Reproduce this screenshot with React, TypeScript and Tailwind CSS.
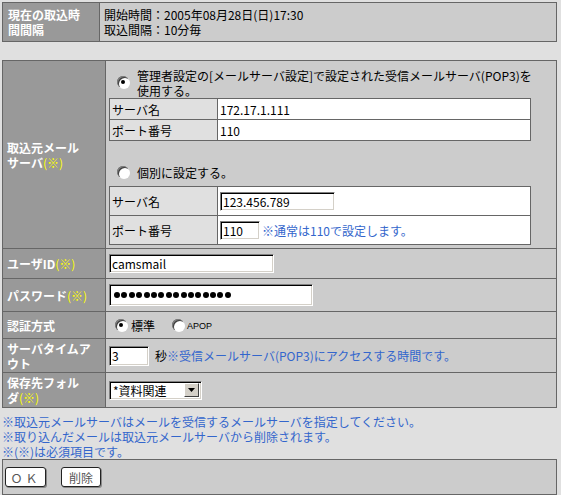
import React from "react";

const jp = "font-['Noto_Sans_CJK_JP','Noto_Sans',sans-serif]";

function Radio({ checked }: { checked?: boolean }) {
  return (
    <span className="inline-flex h-[12px] w-[12px] shrink-0 items-center justify-center rounded-full bg-white shadow-[inset_1px_1px_0_#808080,inset_2px_2px_0_#404040,1px_1px_0_#ffffff]">
      {checked && <span className="h-[4px] w-[4px] rounded-full bg-black" />}
    </span>
  );
}

const inset =
  "border border-t-[#808080] border-l-[#808080] border-b-white border-r-white bg-white shadow-[inset_1px_1px_0_#000,inset_-1px_-1px_0_#d4d0c8]";

function TextBox({ value, className }: { value: string; className: string }) {
  return (
    <input
      readOnly
      value={value}
      className={`${inset} ${className} px-[2px] text-[12px] text-black outline-none ${jp}`}
    />
  );
}

const label = "border border-[#666] bg-[#999] px-[4px] align-middle font-bold text-white";
const cell = "border border-[#666] bg-[#ccc] align-middle";
const Req = () => <span className="font-normal text-[#ffff00]">(※)</span>;

export default function App() {
  return (
    <div className={`min-h-[495px] bg-[#e0e0e0] pl-[2px] pt-[2px] text-[12px] leading-[15px] text-black ${jp}`}>
      {/* 取込時間間隔 */}
      <table className="w-[555px] border-collapse">
        <tbody>
          <tr className="h-[39px]">
            <td className={`${label} w-[97px] pl-[5px]`}>
              現在の取込時
              <br />
              間間隔
            </td>
            <td className={`${cell} pl-[4px]`}>
              開始時間：2005年08月28日(日)17:30
              <br />
              取込間隔：10分毎
            </td>
          </tr>
        </tbody>
      </table>

      <table className="mt-[18px] w-[555px] border-collapse">
        <tbody>
          <tr className="h-[187px]">
            <td className={`${label} w-[103px]`}>
              取込元メール
              <br />
              サーバ<Req />
            </td>
            <td className={`${cell} !align-top pb-[3px] pl-[3px] pt-[7px]`}>
              <div className="flex items-start">
                <span className="ml-[8px] mt-[3px]">
                  <Radio checked />
                </span>
                <div className="ml-[8px]">
                  管理者設定の[メールサーバ設定]で設定された受信メールサーバ(POP3)を
                  <br />
                  使用する。
                </div>
              </div>
              <table className="w-[422px] border-collapse">
                <tbody>
                  <tr className="h-[21px]">
                    <td className="w-[108px] border border-[#666] bg-[#e0e0e0] pl-[2px]">サーバ名</td>
                    <td className="border border-[#666] bg-white pl-[2px]">172.17.1.111</td>
                  </tr>
                  <tr className="h-[21px]">
                    <td className="border border-[#666] bg-[#e0e0e0] pl-[2px]">ポート番号</td>
                    <td className="border border-[#666] bg-white pl-[2px]">110</td>
                  </tr>
                </tbody>
              </table>
              <div className="mt-[24px] flex items-center">
                <span className="ml-[8px]">
                  <Radio />
                </span>
                <span className="ml-[8px]">個別に設定する。</span>
              </div>
              <table className="mt-[6px] w-[422px] border-collapse">
                <tbody>
                  <tr className="h-[29px]">
                    <td className="w-[108px] border border-[#666] bg-[#e0e0e0] pl-[2px]">サーバ名</td>
                    <td className="border border-[#666] bg-white pl-[2px]">
                      <TextBox value="123.456.789" className="block h-[19px] w-[115px]" />
                    </td>
                  </tr>
                  <tr className="h-[29px]">
                    <td className="border border-[#666] bg-[#e0e0e0] pl-[2px]">ポート番号</td>
                    <td className="border border-[#666] bg-white pl-[2px]">
                      <div className="flex items-center">
                        <TextBox value="110" className="h-[19px] w-[40px]" />
                        <span className="ml-[2px] text-[#3366cc]">※通常は110で設定します。</span>
                      </div>
                    </td>
                  </tr>
                </tbody>
              </table>
            </td>
          </tr>

          <tr className="h-[30px]">
            <td className={label}>
              ユーザID<Req />
            </td>
            <td className={`${cell} pl-[3px]`}>
              <TextBox value="camsmail" className="block h-[19px] w-[165px]" />
            </td>
          </tr>

          <tr className="h-[33px]">
            <td className={label}>
              パスワード<Req />
            </td>
            <td className={`${cell} pl-[3px]`}>
              <div className={`${inset} flex h-[22px] w-[204px] items-center gap-[1.4px] pl-[4px]`}>
                {Array.from({ length: 16 }).map((_, i) => (
                  <span key={i} className="h-[6px] w-[6px] rounded-full bg-black" />
                ))}
              </div>
            </td>
          </tr>

          <tr className="h-[27px]">
            <td className={label}>認証方式</td>
            <td className={`${cell} pl-[9px]`}>
              <div className="flex items-center">
                <Radio checked />
                <span className="ml-[4px]">標準</span>
                <span className="ml-[17px]">
                  <Radio />
                </span>
                <span className="ml-[3px] mt-[2px] font-['Liberation_Sans',sans-serif] text-[9px]">APOP</span>
              </div>
            </td>
          </tr>

          <tr className="h-[34px]">
            <td className={label}>
              サーバタイムア
              <br />
              ウト
            </td>
            <td className={`${cell} pl-[3px]`}>
              <div className="flex items-center">
                <TextBox value="3" className="h-[20px] w-[40px]" />
                <span className="ml-[6px]">秒</span>
                <span className="text-[#3366cc]">※受信メールサーバ(POP3)にアクセスする時間です。</span>
              </div>
            </td>
          </tr>

          <tr className="h-[35px]">
            <td className={label}>
              保存先フォル
              <br />
              ダ<Req />
            </td>
            <td className={`${cell} pl-[3px]`}>
              <div className={`${inset} flex h-[19px] w-[93px] items-center justify-between pl-[3px] pr-[2px]`}>
                <span>*資料関連</span>
                <span className="flex h-[14px] w-[15px] items-center justify-center border border-t-white border-l-white border-b-[#404040] border-r-[#404040] bg-[#d4d0c8]">
                  <svg width="7" height="4" viewBox="0 0 7 4">
                    <path d="M0 0h7L3.5 4z" fill="#000" />
                  </svg>
                </span>
              </div>
            </td>
          </tr>
        </tbody>
      </table>

      <div className="pt-[6px] text-[#3366cc]">
        <div>※取込元メールサーバはメールを受信するメールサーバを指定してください。</div>
        <div>※取り込んだメールは取込元メールサーバから削除されます。</div>
        <div>※(※)は必須項目です。</div>
      </div>

      <div className="flex h-[36px] w-[555px] items-center gap-[15px] border border-[#666] bg-[#ccc] pl-[2px]">
        <button className="h-[20px] w-[41px] rounded-[3px] border border-[#222] bg-white text-[12px] tracking-[3px] text-[#555] shadow-[1px_1px_0_#888]">
          ＯＫ
        </button>
        <button className="h-[20px] w-[40px] rounded-[3px] border border-[#222] bg-white text-[12px] text-[#555] shadow-[1px_1px_0_#888]">
          削除
        </button>
      </div>
    </div>
  );
}
